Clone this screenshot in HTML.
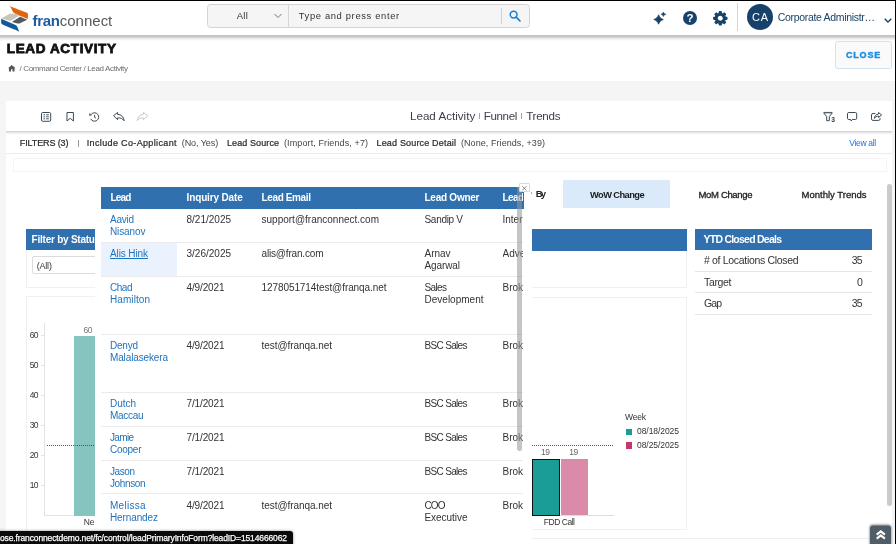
<!DOCTYPE html>
<html><head><meta charset="utf-8"><title>Lead Activity</title>
<style>
*{box-sizing:border-box;margin:0;padding:0}
html,body{width:896px;height:544px;overflow:hidden}
body{background:#f5f5f5;font-family:"Liberation Sans",sans-serif;position:relative}
.a{position:absolute}
.t{position:absolute;white-space:pre;font-family:"Liberation Sans",sans-serif}
svg{position:absolute;overflow:visible}
#root{position:absolute;left:0;top:0;width:896px;height:544px;will-change:transform}
</style></head><body><div id="root">
<!-- header -->
<div class="a" style="left:0;top:0;width:896px;height:35px;background:#fff"></div>
<!-- page title strip -->
<div class="a" style="left:0;top:38px;width:896px;height:42.5px;background:#fff"></div>
<div class="a" style="left:0;top:35px;width:896px;height:6px;background:linear-gradient(#c2c2c2 0%,#c8c8c8 30%,#e6e6e6 55%,#f6f6f6 80%,#fff 100%)"></div>
<!-- logo -->
<svg style="left:0;top:0" width="32" height="36" viewBox="0 0 32 36">
<path d="M9.9 5.9 C13 7.5 22 10.8 26.5 12.6 C27.6 13 27.9 13.6 27.9 14.6 L27.9 19 L19.9 15.8 C16 14.2 12.9 12.5 12.2 10.4 C11.6 8.6 10.6 7 9.9 5.9Z" fill="#e0640f"/>
<path d="M1.3 18.4 L8.8 14.2 C9.4 13.9 10 13.8 10.8 13.8 L16.3 13.8 L19.3 15.8 L10.3 21Z" fill="#c9c5b8"/>
<path d="M11.8 22 L20.2 16.8 L27.2 19.7 L20.5 23.1 C19.6 23.6 18.7 23.7 17.6 23.5Z" fill="#55575b"/>
<path d="M1.1 18.7 L15 24.8 C16.5 25.5 17.2 26.5 17.8 28 L19.3 31.8 C15 29.6 6 26.2 2.6 24.6 C1.6 24.1 1.2 23.5 1.2 22.6Z" fill="#0f5a99"/>
</svg>
<!-- search -->
<div class="a" style="left:207.3px;top:4px;width:322.3px;height:24px;background:#f5f5f5;border:1px solid #d4d4d4;border-radius:3.5px"></div>
<div class="a" style="left:288px;top:5px;width:1px;height:22px;background:#d6d6d6"></div>
<div class="a" style="left:500.5px;top:8px;width:1px;height:16px;background:#d0d0d0"></div>
<svg style="left:274px;top:13px" width="8" height="6" viewBox="0 0 8 6"><path d="M0.5 1 L4 4.5 L7.5 1" fill="none" stroke="#777" stroke-width="1"/></svg>
<svg style="left:509px;top:10px" width="12" height="12" viewBox="0 0 12 12"><circle cx="4.6" cy="4.6" r="3.4" fill="none" stroke="#1a7fd4" stroke-width="1.5"/><path d="M7.2 7.2 L11 11" stroke="#1a7fd4" stroke-width="1.7" stroke-linecap="round"/></svg>
<!-- header right icons -->
<svg style="left:652px;top:10px" width="16" height="16" viewBox="0 0 16 16">
<path d="M6.6 4.8 C7.6 7.4 8.6 8.5 11.3 9.5 C8.6 10.5 7.6 11.6 6.6 14.2 C5.6 11.6 4.6 10.5 1.8 9.5 C4.6 8.5 5.6 7.4 6.6 4.8Z" fill="#17426a" stroke="#17426a" stroke-width=".8" stroke-linejoin="round"/>
<path d="M11.4 2.1 C11.9 3.4 12.4 3.9 13.8 4.3 C12.4 4.7 11.9 5.2 11.4 6.5 C10.9 5.2 10.4 4.7 9 4.3 C10.4 3.9 10.9 3.4 11.4 2.1Z" fill="#17426a" stroke="#17426a" stroke-width=".6" stroke-linejoin="round"/>
</svg>
<div class="a" style="left:682.8px;top:11px;width:14.4px;height:14.4px;border-radius:50%;background:#17426a"></div>
<span class="t" style="left:686.6px;top:11.6px;font-size:11.5px;line-height:13px;font-weight:700;color:#fff">?</span>
<svg style="left:713px;top:11px" width="14.6" height="14.6" viewBox="-7.3 -7.3 14.6 14.6">
<g fill="#17426a">
<circle r="5.6"/>
<g id="tt"><rect x="-1.6" y="-7.2" width="3.2" height="14.4" rx=".8"/><rect x="-7.2" y="-1.6" width="14.4" height="3.2" rx=".8"/></g>
<use href="#tt" transform="rotate(45)"/>
</g>
<circle r="2.5" fill="#fff"/>
</svg>
<div class="a" style="left:737px;top:2.5px;width:1px;height:28px;background:#d4d4d4"></div>
<div class="a" style="left:746.6px;top:4px;width:26.3px;height:26.3px;border-radius:50%;background:#17426a"></div>
<svg style="left:883.5px;top:18.3px" width="8" height="5" viewBox="0 0 8 5"><path d="M0.7 0.7 L4 4 L7.3 0.7" fill="none" stroke="#17426a" stroke-width="1.3"/></svg>
<!-- home icon -->
<svg style="left:8px;top:64.8px" width="7.5" height="6.6" viewBox="0 0 15 13"><path d="M7.5 0 L0 6.5 H2 V13 H6 V8.5 H9 V13 H13 V6.5 H15Z" fill="#555"/></svg>
<!-- close button -->
<div class="a" style="left:835.2px;top:41px;width:57.2px;height:27.7px;background:#fafafa;border:1px solid #d3e2f2;border-radius:2.5px"></div>

<!-- main panel -->
<div class="a" style="left:6.4px;top:101px;width:885.8px;height:443px;background:#fff"></div>
<div class="a" style="left:6.4px;top:130.7px;width:885.8px;height:4.5px;background:linear-gradient(#d8d8d8 0%,#d4d4d4 20%,#ececec 45%,#f8f8f8 70%,#fff 100%)"></div>
<div class="a" style="left:6.4px;top:152.8px;width:885.8px;height:1px;background:#ececec"></div>
<div class="a" style="left:12.8px;top:158px;width:874.5px;height:13.5px;border:1px solid #f4f4f4"></div>

<!-- toolbar icons -->
<svg style="left:41px;top:111.7px" width="10.2" height="9.8" viewBox="0 0 10.2 9.8" fill="none" stroke="#3d4752" stroke-width="1">
<rect x=".5" y=".5" width="9.2" height="8.8" rx="1.3"/>
<g fill="#4f5862" stroke="none"><rect x="2.4" y="2.3" width="1.7" height="1"/><rect x="5.1" y="2.3" width="2.8" height="1"/><rect x="2.4" y="4.3" width="1.7" height="1"/><rect x="5.1" y="4.3" width="2.8" height="1"/><rect x="2.4" y="6.3" width="1.7" height="1"/><rect x="5.1" y="6.3" width="2.8" height="1"/></g></svg>
<svg style="left:66px;top:111.7px" width="8.4" height="9.8" viewBox="0 0 8.4 9.8" fill="none" stroke="#3d4752" stroke-width="1"><path d="M1 .5 H7.4 V9 L4.2 6.3 L1 9Z" stroke-linejoin="round"/></svg>
<svg style="left:88.8px;top:111.6px" width="10.4" height="9.8" viewBox="0 0 10.4 9.8" fill="none" stroke="#3d4752" stroke-width="1"><path d="M2.38 2.19 A4.2 4.2 0 1 1 1.76 6.91"/><path d="M.3 1.5 L.7 3.8 L2.8 3Z" fill="#3d4752" stroke-width=".3" stroke-linejoin="round"/><path d="M5.6 2.8 V5.3 L7.1 6.2" stroke-width=".95"/></svg>
<svg style="left:112.5px;top:111.6px" width="12" height="9.4" viewBox="0 0 12 9.4" fill="none" stroke="#3d4752" stroke-width="1" stroke-linejoin="round"><path d="M4.6 .5 L.5 3.7 L4.6 7.7 V5.9 C7.5 5.7 9.5 6.4 11.2 8.8 C10.7 4.9 8.5 2.6 4.6 2.3Z"/></svg>
<svg style="left:137px;top:111.6px" width="11.4" height="9.4" viewBox="0 0 11.4 9.4" fill="none" stroke="#c6c9cd" stroke-width="1" stroke-linejoin="round"><path d="M6.4 .5 L10.8 3.7 L6.4 7.7 V5.9 C3.5 5.7 1.8 6.6 .3 8.6 C.8 4.9 2.6 2.6 6.4 2.3Z"/></svg>
<!-- title separators -->
<div class="a" style="left:479.2px;top:112.9px;width:1px;height:5.9px;background:#a5a5a5"></div>
<div class="a" style="left:520.8px;top:112.9px;width:1px;height:5.9px;background:#a5a5a5"></div>
<!-- toolbar right icons -->
<svg style="left:823px;top:111.6px" width="13" height="10.6" viewBox="0 0 13 10.6" fill="none" stroke="#3d4752" stroke-width="1" stroke-linejoin="round"><path d="M.6 .8 H9.3 L6.3 4.6 V8.7 H3.7 V4.6Z"/><path d="M1 .4 H8.9" stroke-width=".6"/></svg>
<span class="t" style="left:831.2px;top:116.1px;font-size:6.7px;line-height:7px;font-weight:700;color:#2f3842">3</span>
<svg style="left:847px;top:111.7px" width="10.2" height="9.8" viewBox="0 0 10.2 9.8" fill="none" stroke="#3d4752" stroke-width="1" stroke-linejoin="round">
<path d="M1.8 .5 H8.4 Q9.7 .5 9.7 1.8 V6.2 Q9.7 7.5 8.4 7.5 H5.3 L4.2 9 L3.6 7.5 H1.8 Q.5 7.5 .5 6.2 V1.8 Q.5 .5 1.8 .5Z"/></svg>
<svg style="left:871px;top:111.4px" width="11.6" height="10.4" viewBox="0 0 11.6 10.4" fill="none" stroke="#3d4752" stroke-width="1" stroke-linejoin="round"><path d="M4.4 2.5 H2 Q.5 2.5 .5 4 V7.9 Q.5 9.4 2 9.4 H7.6 Q9.1 9.4 9.1 7.9 V7.2"/><path d="M7.6 1.5 L10.6 4 L7.6 6.5 V5.1 C5.6 5.1 4.3 5.8 3.4 7.4 C3.5 4.9 5 3.3 7.6 3Z"/></svg>

<div class="a" style="left:78px;top:139.6px;width:1px;height:7px;background:#9a9a9a"></div>
<!-- tabs -->
<div class="a" style="left:563px;top:180px;width:107px;height:28px;background:#dbeafb"></div>

<!-- cards behind -->
<div class="a" style="left:26px;top:229.5px;width:100px;height:58px;border:1px solid #f0f0f0"></div>
<div class="a" style="left:26.4px;top:229.2px;width:100px;height:21.3px;background:#3070af"></div>
<div class="a" style="left:32.2px;top:256.4px;width:90px;height:17.2px;border:1px solid #dcdcdc;border-radius:2px;background:#fff"></div>
<div class="a" style="left:26px;top:296.2px;width:100px;height:260px;border:1px solid #f0f0f0"></div>
<!-- left chart -->
<div class="a" style="left:44px;top:323px;width:1px;height:192.5px;background:#e3e3e3"></div>
<div class="a" style="left:44px;top:515px;width:60px;height:1px;background:#e3e3e3"></div>
<div class="a" style="left:40.5px;top:335px;width:4px;height:1px;background:#e3e3e3"></div>
<div class="a" style="left:40.5px;top:365px;width:4px;height:1px;background:#e3e3e3"></div>
<div class="a" style="left:40.5px;top:395px;width:4px;height:1px;background:#e3e3e3"></div>
<div class="a" style="left:40.5px;top:425px;width:4px;height:1px;background:#e3e3e3"></div>
<div class="a" style="left:40.5px;top:455px;width:4px;height:1px;background:#e3e3e3"></div>
<div class="a" style="left:40.5px;top:485px;width:4px;height:1px;background:#e3e3e3"></div>
<div class="a" style="left:74px;top:336px;width:27px;height:179.5px;background:#86c4c0"></div>
<div class="a" style="left:47px;top:445px;width:54px;height:1px;background:repeating-linear-gradient(90deg,#555 0,#555 1px,transparent 1px,transparent 2px)"></div>

<!-- middle cards -->
<div class="a" style="left:500px;top:229.5px;width:187px;height:58px;border:1px solid #f0f0f0"></div>
<div class="a" style="left:500px;top:229.3px;width:186.5px;height:21.3px;background:#3070af"></div>
<div class="a" style="left:500px;top:296.5px;width:187px;height:233px;border:1px solid #f0f0f0"></div>
<div class="a" style="left:13.5px;top:538px;width:857px;height:1px;background:#eee"></div>
<!-- right chart -->
<div class="a" style="left:532px;top:445px;width:82px;height:1px;background:repeating-linear-gradient(90deg,#555 0,#555 1px,transparent 1px,transparent 2px)"></div>
<div class="a" style="left:532px;top:515px;width:82px;height:1px;background:#ddd"></div>
<div class="a" style="left:532px;top:458.8px;width:27.6px;height:56.8px;background:#1a9d96;border:1px solid #111"></div>
<div class="a" style="left:560.6px;top:459px;width:27.2px;height:56.2px;background:#da8ba9"></div>
<div class="a" style="left:626px;top:428.5px;width:6.3px;height:6.3px;background:#1a9d96"></div>
<div class="a" style="left:626px;top:442.3px;width:6.3px;height:6.3px;background:#c2386c"></div>

<!-- YTD card -->
<div class="a" style="left:695px;top:229px;width:176.5px;height:21.2px;background:#3070af"></div>
<div class="a" style="left:695px;top:271px;width:176.5px;height:1px;background:#e6e6e6"></div>
<div class="a" style="left:695px;top:292.2px;width:176.5px;height:1px;background:#e6e6e6"></div>
<div class="a" style="left:695px;top:314px;width:176.5px;height:1px;background:#e6e6e6"></div>

<!-- popup -->
<div class="a" style="left:94.6px;top:176px;width:436.9px;height:368px;background:#fff"></div>
<div class="a" style="left:101px;top:187px;width:422.5px;height:21.5px;background:#3070af"></div>
<div class="a" style="left:101px;top:242.5px;width:76px;height:33.5px;background:#eaf3fd"></div>
<div class="a" style="left:101px;top:242px;width:422px;height:1px;background:#ebebeb"></div>
<div class="a" style="left:101px;top:276px;width:422px;height:1px;background:#ebebeb"></div>
<div class="a" style="left:101px;top:334px;width:422px;height:1px;background:#ebebeb"></div>
<div class="a" style="left:101px;top:392.3px;width:422px;height:1px;background:#ebebeb"></div>
<div class="a" style="left:101px;top:426.3px;width:422px;height:1px;background:#ebebeb"></div>
<div class="a" style="left:101px;top:459.8px;width:422px;height:1px;background:#ebebeb"></div>
<div class="a" style="left:101px;top:493px;width:422px;height:1px;background:#ebebeb"></div>
<span class="t" style="left:32.5px;top:10.50px;font-size:15px;line-height:20px;font-weight:700;color:#1d5c9f;letter-spacing:-0.348px;">fran</span>
<span class="t" style="left:59.8px;top:10.50px;font-size:15px;line-height:20px;font-weight:400;color:#58595b;letter-spacing:-0.008px;">connect</span>
<span class="t" style="left:236.8px;top:9.60px;font-size:9.4px;line-height:12px;font-weight:400;color:#333;letter-spacing:0.289px;">All</span>
<span class="t" style="left:298.7px;top:9.80px;font-size:9.4px;line-height:12px;font-weight:400;color:#333;letter-spacing:0.654px;">Type and press enter</span>
<span class="t" style="left:752px;top:10.00px;font-size:11px;line-height:14px;font-weight:400;color:#fff;letter-spacing:0.719px;">CA</span>
<span class="t" style="left:777.7px;top:9.50px;font-size:10.5px;line-height:14px;font-weight:400;color:#1a4166;letter-spacing:-0.316px;">Corporate Administr…</span>
<span class="t" style="left:6.75px;top:40.00px;font-size:13.5px;line-height:18px;font-weight:700;color:#111;letter-spacing:0.645px;-webkit-text-stroke:0.8px #111;">LEAD ACTIVITY</span>
<span class="t" style="left:19.5px;top:63.50px;font-size:8px;line-height:10px;font-weight:400;color:#6e6e6e;letter-spacing:-0.344px;">/ Command Center / Lead Activity</span>
<span class="t" style="left:845.9px;top:49.20px;font-size:9px;line-height:12px;font-weight:700;color:#1a8ee4;letter-spacing:0.846px;-webkit-text-stroke:0.4px #1a8ee4;">CLOSE</span>
<span class="t" style="left:410px;top:107.90px;font-size:11.6px;line-height:15px;font-weight:400;color:#3a3f4a;letter-spacing:0.009px;">Lead Activity</span>
<span class="t" style="left:483.7px;top:107.90px;font-size:11.6px;line-height:15px;font-weight:400;color:#3a3f4a;letter-spacing:-0.351px;">Funnel</span>
<span class="t" style="left:526.2px;top:107.90px;font-size:11.6px;line-height:15px;font-weight:400;color:#3a3f4a;letter-spacing:-0.271px;">Trends</span>
<span class="t" style="left:19.75px;top:137.00px;font-size:9px;line-height:12px;font-weight:400;color:#2b2b2b;letter-spacing:-0.109px;-webkit-text-stroke:0.22px #2b2b2b;">FILTERS (3)</span>
<span class="t" style="left:86.75px;top:137.00px;font-size:9px;line-height:12px;font-weight:400;color:#2b2b2b;letter-spacing:0.352px;-webkit-text-stroke:0.22px #2b2b2b;">Include Co-Applicant</span>
<span class="t" style="left:181.75px;top:137.00px;font-size:9px;line-height:12px;font-weight:400;color:#444;letter-spacing:-0.066px;">(No, Yes)</span>
<span class="t" style="left:227px;top:137.00px;font-size:9px;line-height:12px;font-weight:400;color:#2b2b2b;letter-spacing:0.095px;-webkit-text-stroke:0.22px #2b2b2b;">Lead Source</span>
<span class="t" style="left:284px;top:137.00px;font-size:9px;line-height:12px;font-weight:400;color:#444;letter-spacing:0.111px;">(Import, Friends, +7)</span>
<span class="t" style="left:376.5px;top:137.00px;font-size:9px;line-height:12px;font-weight:400;color:#2b2b2b;letter-spacing:0.173px;-webkit-text-stroke:0.22px #2b2b2b;">Lead Source Detail</span>
<span class="t" style="left:461px;top:137.00px;font-size:9px;line-height:12px;font-weight:400;color:#444;letter-spacing:0.063px;">(None, Friends, +39)</span>
<span class="t" style="left:849.3px;top:137.90px;font-size:8.5px;line-height:11px;font-weight:400;color:#1a73e8;letter-spacing:-0.320px;">View all</span>
<span class="t" style="left:535.8px;top:188.30px;font-size:9.5px;line-height:12px;font-weight:700;color:#222;letter-spacing:-1.956px;">By</span>
<span class="t" style="left:590px;top:188.60px;font-size:9.3px;line-height:12px;font-weight:700;color:#1a1a1a;letter-spacing:-0.572px;">WoW Change</span>
<span class="t" style="left:698.5px;top:188.80px;font-size:9.5px;line-height:12px;font-weight:400;color:#222;letter-spacing:-0.337px;-webkit-text-stroke:0.3px #222;">MoM Change</span>
<span class="t" style="left:801.5px;top:188.80px;font-size:9.5px;line-height:12px;font-weight:400;color:#222;letter-spacing:0.004px;-webkit-text-stroke:0.3px #222;">Monthly Trends</span>
<span class="t" style="left:31.6px;top:233.40px;font-size:10px;line-height:13px;font-weight:700;color:#fff;letter-spacing:-0.235px;">Filter by Statu</span>
<span class="t" style="left:36.8px;top:259.50px;font-size:9px;line-height:12px;font-weight:400;color:#333;letter-spacing:-0.225px;">(All)</span>
<span class="t" style="left:703.5px;top:232.00px;font-size:10.5px;line-height:14px;font-weight:700;color:#fff;letter-spacing:-0.758px;">YTD Closed Deals</span>
<span class="t" style="left:704px;top:252.90px;font-size:10.5px;line-height:14px;font-weight:400;color:#333;letter-spacing:-0.324px;"># of Locations Closed</span>
<span class="t" style="left:851.7px;top:252.90px;font-size:10.5px;line-height:14px;font-weight:400;color:#333;letter-spacing:-0.888px;">35</span>
<span class="t" style="left:704px;top:274.50px;font-size:10.5px;line-height:14px;font-weight:400;color:#333;letter-spacing:-0.338px;">Target</span>
<span class="t" style="left:857px;top:274.50px;font-size:10.5px;line-height:14px;font-weight:400;color:#333;">0</span>
<span class="t" style="left:704px;top:296.00px;font-size:10.5px;line-height:14px;font-weight:400;color:#333;letter-spacing:-0.930px;">Gap</span>
<span class="t" style="left:851.7px;top:296.00px;font-size:10.5px;line-height:14px;font-weight:400;color:#333;letter-spacing:-0.888px;">35</span>
<span class="t" style="left:29.8px;top:329.50px;font-size:8.5px;line-height:11px;font-weight:400;color:#333;letter-spacing:-0.769px;">60</span>
<span class="t" style="left:29.8px;top:359.80px;font-size:8.5px;line-height:11px;font-weight:400;color:#333;letter-spacing:-0.769px;">50</span>
<span class="t" style="left:29.8px;top:390.00px;font-size:8.5px;line-height:11px;font-weight:400;color:#333;letter-spacing:-0.769px;">40</span>
<span class="t" style="left:29.8px;top:419.80px;font-size:8.5px;line-height:11px;font-weight:400;color:#333;letter-spacing:-0.769px;">30</span>
<span class="t" style="left:29.8px;top:449.80px;font-size:8.5px;line-height:11px;font-weight:400;color:#333;letter-spacing:-0.769px;">20</span>
<span class="t" style="left:29.8px;top:480.00px;font-size:8.5px;line-height:11px;font-weight:400;color:#333;letter-spacing:-0.769px;">10</span>
<span class="t" style="left:83.6px;top:324.50px;font-size:8.5px;line-height:11px;font-weight:400;color:#777;letter-spacing:-0.669px;">60</span>
<span class="t" style="left:83.8px;top:516.50px;font-size:8.5px;line-height:11px;font-weight:400;color:#333;letter-spacing:-0.175px;">Ne</span>
<span class="t" style="left:541px;top:446.90px;font-size:8.5px;line-height:11px;font-weight:400;color:#666;letter-spacing:-0.469px;">19</span>
<span class="t" style="left:569.3px;top:446.90px;font-size:8.5px;line-height:11px;font-weight:400;color:#666;letter-spacing:-0.469px;">19</span>
<span class="t" style="left:543.8px;top:516.50px;font-size:8.5px;line-height:11px;font-weight:400;color:#333;letter-spacing:-0.469px;">FDD Call</span>
<span class="t" style="left:625px;top:411.50px;font-size:8.5px;line-height:11px;font-weight:400;color:#333;letter-spacing:-0.193px;">Week</span>
<span class="t" style="left:637px;top:426.00px;font-size:8.5px;line-height:11px;font-weight:400;color:#333;letter-spacing:-0.061px;">08/18/2025</span>
<span class="t" style="left:637px;top:440.00px;font-size:8.5px;line-height:11px;font-weight:400;color:#333;letter-spacing:-0.061px;">08/25/2025</span>
<span class="t" style="left:0px;top:532.50px;font-size:8.5px;line-height:11px;font-weight:400;color:#fff;letter-spacing:-0.127px;z-index:5;-webkit-text-stroke:0.25px #fff;">ose.franconnectdemo.net/fc/control/leadPrimaryInfoForm?leadID=1514666062</span>
<span class="t" style="left:110.5px;top:191.10px;font-size:10px;line-height:13px;font-weight:700;color:#fff;letter-spacing:-0.848px;">Lead</span>
<span class="t" style="left:186.6px;top:191.00px;font-size:10px;line-height:13px;font-weight:700;color:#fff;letter-spacing:-0.145px;">Inquiry Date</span>
<span class="t" style="left:261.5px;top:191.00px;font-size:10px;line-height:13px;font-weight:700;color:#fff;letter-spacing:-0.368px;">Lead Email</span>
<span class="t" style="left:424.5px;top:191.00px;font-size:10px;line-height:13px;font-weight:700;color:#fff;letter-spacing:-0.250px;">Lead Owner</span>
<span class="t" style="left:502.5px;top:191.00px;font-size:10px;line-height:13px;font-weight:700;color:#fff;letter-spacing:-0.615px;width:20.3px;overflow:hidden;">Lead</span>
<span class="t" style="left:110px;top:213.30px;font-size:10px;line-height:13px;font-weight:400;color:#1f72bd;letter-spacing:-0.254px;">Aavid</span>
<span class="t" style="left:110px;top:225.30px;font-size:10px;line-height:13px;font-weight:400;color:#1f72bd;letter-spacing:-0.107px;">Nisanov</span>
<span class="t" style="left:186.5px;top:213.30px;font-size:10px;line-height:13px;font-weight:400;color:#333;letter-spacing:0.012px;">8/21/2025</span>
<span class="t" style="left:261.5px;top:213.30px;font-size:10px;line-height:13px;font-weight:400;color:#333;letter-spacing:0.003px;">support@franconnect.com</span>
<span class="t" style="left:424.5px;top:213.30px;font-size:10px;line-height:13px;font-weight:400;color:#333;letter-spacing:-0.299px;">Sandip V</span>
<span class="t" style="left:502.5px;top:213.30px;font-size:10px;line-height:13px;font-weight:400;color:#333;width:20.3px;overflow:hidden;">Inter</span>
<span class="t" style="left:110px;top:247.00px;font-size:10px;line-height:13px;font-weight:400;color:#1f72bd;letter-spacing:-0.113px;text-decoration:underline;">Alis Hink</span>
<span class="t" style="left:186.5px;top:247.00px;font-size:10px;line-height:13px;font-weight:400;color:#333;letter-spacing:0.012px;">3/26/2025</span>
<span class="t" style="left:261.5px;top:247.00px;font-size:10px;line-height:13px;font-weight:400;color:#333;letter-spacing:-0.172px;">alis@fran.com</span>
<span class="t" style="left:424.5px;top:247.00px;font-size:10px;line-height:13px;font-weight:400;color:#333;letter-spacing:-0.031px;">Arnav</span>
<span class="t" style="left:424.5px;top:259.00px;font-size:10px;line-height:13px;font-weight:400;color:#333;letter-spacing:-0.107px;">Agarwal</span>
<span class="t" style="left:502.5px;top:247.00px;font-size:10px;line-height:13px;font-weight:400;color:#333;width:20.3px;overflow:hidden;">Adve</span>
<span class="t" style="left:110px;top:280.80px;font-size:10px;line-height:13px;font-weight:400;color:#1f72bd;letter-spacing:-0.469px;">Chad</span>
<span class="t" style="left:110px;top:292.80px;font-size:10px;line-height:13px;font-weight:400;color:#1f72bd;letter-spacing:0.076px;">Hamilton</span>
<span class="t" style="left:186.5px;top:280.80px;font-size:10px;line-height:13px;font-weight:400;color:#333;letter-spacing:-0.134px;">4/9/2021</span>
<span class="t" style="left:261.5px;top:280.80px;font-size:10px;line-height:13px;font-weight:400;color:#333;letter-spacing:-0.080px;">1278051714test@franqa.net</span>
<span class="t" style="left:424.5px;top:280.80px;font-size:10px;line-height:13px;font-weight:400;color:#333;letter-spacing:-0.629px;">Sales</span>
<span class="t" style="left:424.5px;top:292.80px;font-size:10px;line-height:13px;font-weight:400;color:#333;letter-spacing:0.008px;">Development</span>
<span class="t" style="left:502.5px;top:280.80px;font-size:10px;line-height:13px;font-weight:400;color:#333;width:20.3px;overflow:hidden;">Broke</span>
<span class="t" style="left:110px;top:339.00px;font-size:10px;line-height:13px;font-weight:400;color:#1f72bd;letter-spacing:-0.227px;">Denyd</span>
<span class="t" style="left:110px;top:351.00px;font-size:10px;line-height:13px;font-weight:400;color:#1f72bd;letter-spacing:-0.135px;">Malalasekera</span>
<span class="t" style="left:186.5px;top:339.00px;font-size:10px;line-height:13px;font-weight:400;color:#333;letter-spacing:-0.134px;">4/9/2021</span>
<span class="t" style="left:261.5px;top:339.00px;font-size:10px;line-height:13px;font-weight:400;color:#333;letter-spacing:-0.058px;">test@franqa.net</span>
<span class="t" style="left:424.5px;top:339.00px;font-size:10px;line-height:13px;font-weight:400;color:#333;letter-spacing:-0.670px;">BSC Sales</span>
<span class="t" style="left:502.5px;top:339.00px;font-size:10px;line-height:13px;font-weight:400;color:#333;width:20.3px;overflow:hidden;">Broke</span>
<span class="t" style="left:110px;top:397.00px;font-size:10px;line-height:13px;font-weight:400;color:#1f72bd;letter-spacing:-0.031px;">Dutch</span>
<span class="t" style="left:110px;top:409.00px;font-size:10px;line-height:13px;font-weight:400;color:#1f72bd;letter-spacing:-0.303px;">Maccau</span>
<span class="t" style="left:186.5px;top:397.00px;font-size:10px;line-height:13px;font-weight:400;color:#333;letter-spacing:-0.134px;">7/1/2021</span>
<span class="t" style="left:424.5px;top:397.00px;font-size:10px;line-height:13px;font-weight:400;color:#333;letter-spacing:-0.670px;">BSC Sales</span>
<span class="t" style="left:502.5px;top:397.00px;font-size:10px;line-height:13px;font-weight:400;color:#333;width:20.3px;overflow:hidden;">Broke</span>
<span class="t" style="left:110px;top:431.00px;font-size:10px;line-height:13px;font-weight:400;color:#1f72bd;letter-spacing:-0.672px;">Jamie</span>
<span class="t" style="left:110px;top:443.00px;font-size:10px;line-height:13px;font-weight:400;color:#1f72bd;letter-spacing:-0.263px;">Cooper</span>
<span class="t" style="left:186.5px;top:431.00px;font-size:10px;line-height:13px;font-weight:400;color:#333;letter-spacing:-0.134px;">7/1/2021</span>
<span class="t" style="left:424.5px;top:431.00px;font-size:10px;line-height:13px;font-weight:400;color:#333;letter-spacing:-0.670px;">BSC Sales</span>
<span class="t" style="left:502.5px;top:431.00px;font-size:10px;line-height:13px;font-weight:400;color:#333;width:20.3px;overflow:hidden;">Broke</span>
<span class="t" style="left:110px;top:464.70px;font-size:10px;line-height:13px;font-weight:400;color:#1f72bd;letter-spacing:-0.422px;">Jason</span>
<span class="t" style="left:110px;top:476.70px;font-size:10px;line-height:13px;font-weight:400;color:#1f72bd;letter-spacing:-0.385px;">Johnson</span>
<span class="t" style="left:186.5px;top:464.70px;font-size:10px;line-height:13px;font-weight:400;color:#333;letter-spacing:-0.134px;">7/1/2021</span>
<span class="t" style="left:424.5px;top:464.70px;font-size:10px;line-height:13px;font-weight:400;color:#333;letter-spacing:-0.670px;">BSC Sales</span>
<span class="t" style="left:502.5px;top:464.70px;font-size:10px;line-height:13px;font-weight:400;color:#333;width:20.3px;overflow:hidden;">Broke</span>
<span class="t" style="left:110px;top:498.50px;font-size:10px;line-height:13px;font-weight:400;color:#1f72bd;letter-spacing:0.266px;">Melissa</span>
<span class="t" style="left:110px;top:510.50px;font-size:10px;line-height:13px;font-weight:400;color:#1f72bd;letter-spacing:-0.115px;">Hernandez</span>
<span class="t" style="left:186.5px;top:498.50px;font-size:10px;line-height:13px;font-weight:400;color:#333;letter-spacing:-0.134px;">4/9/2021</span>
<span class="t" style="left:261.5px;top:498.50px;font-size:10px;line-height:13px;font-weight:400;color:#333;letter-spacing:-0.058px;">test@franqa.net</span>
<span class="t" style="left:424.5px;top:498.50px;font-size:10px;line-height:13px;font-weight:400;color:#333;letter-spacing:-0.891px;">COO</span>
<span class="t" style="left:424.5px;top:510.50px;font-size:10px;line-height:13px;font-weight:400;color:#333;letter-spacing:-0.045px;">Executive</span>
<span class="t" style="left:502.5px;top:498.50px;font-size:10px;line-height:13px;font-weight:400;color:#333;width:20.3px;overflow:hidden;">Broke</span>
<!-- popup scrollbar + mask -->
<div class="a" style="left:523.5px;top:187px;width:8px;height:357px;background:#fff"></div><div class="a" style="left:531.3px;top:192.4px;width:1.1px;height:1.7px;background:#a8a8a8"></div>
<div class="a" style="left:517.3px;top:187px;width:4.6px;height:264px;background:rgba(150,150,150,.55);border-radius:0 0 2.3px 2.3px"></div>
<div class="a" style="left:519.3px;top:183.2px;width:10.5px;height:9.3px;background:#fff;border:1px solid #dadada;border-radius:1px"></div>
<svg style="left:522.1px;top:185.5px" width="4.6" height="4.6" viewBox="0 0 4.6 4.6"><path d="M.2 .2 L4.4 4.4 M4.4 .2 L.2 4.4" stroke="#666" stroke-width=".75"/></svg>
<!-- page scrollbar -->
<div class="a" style="left:886.5px;top:183.7px;width:5.3px;height:322.3px;background:#cbcbcb;border-radius:2.7px"></div>
<!-- status bar -->
<div class="a" style="left:-4px;top:531.2px;width:296.5px;height:16px;background:#0a0a0a;border-top-right-radius:3px;box-shadow:0 0 3px rgba(0,0,0,.45)"></div>
<!-- scroll to top -->
<div class="a" style="left:870px;top:525.8px;width:20.8px;height:22px;background:#4f5d68;border-radius:2.5px 2.5px 0 0;box-shadow:0 -.5px 2.5px rgba(0,0,0,.7)"></div>
<svg style="left:875.8px;top:530px" width="9.6" height="9.4" viewBox="0 0 9.6 9.4" fill="none" stroke="#fff" stroke-width="2.1"><path d="M.7 4.6 L4.8 1.4 L8.9 4.6 M.7 8.6 L4.8 5.4 L8.9 8.6"/></svg>
<!-- window edges -->
<div class="a" style="left:0;top:0;width:896px;height:1px;background:#000"></div>
<div class="a" style="left:894.6px;top:0;width:1.4px;height:544px;background:#000"></div>
</div></body></html>
